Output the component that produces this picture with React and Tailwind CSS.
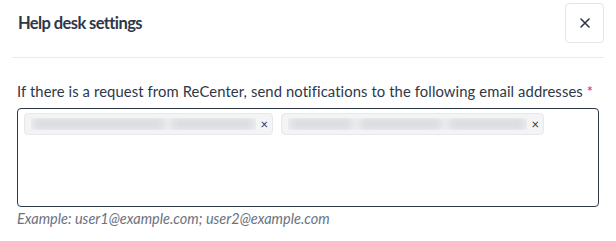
import React from "react";

function Chip({ width, blurs }) {
  return (
    <div
      className="flex items-center h-[22px] rounded-[4px] border border-[#e6e8eb] bg-[#f3f4f6] pl-[6px] pr-[4px]"
      style={{ width }}
    >
      <div className="flex-1 flex items-center gap-[4px] overflow-hidden">
        {blurs.map((w, i) => (
          <div key={i} className="h-[12px] rounded-full bg-[#d6d9dd] blur-[4px]" style={{ width: w }} />
        ))}
      </div>
      <span className="ml-[4px] text-[13px] leading-none text-[#2d3748]">×</span>
    </div>
  );
}

export default function App() {
  return (
    <div className="w-[616px] h-[241px] bg-white font-['Lato','Noto_Sans',sans-serif] text-[#2d3748]">
      <div className="flex items-center justify-between pl-[18px] pr-[12px] pt-[3px]">
        <h2 className="text-[16.5px] font-bold tracking-[-0.6px] whitespace-nowrap text-[#2d3748]">Help desk settings</h2>
        <button className="flex items-center justify-center w-[39px] h-[40px] rounded-[4px] border border-[#e2e5e9] bg-white">
          <svg width="12" height="12" viewBox="0 0 12 12" fill="none" stroke="#2d3748" strokeWidth="1.6" strokeLinecap="round">
            <path d="M2 2L10 10M10 2L2 10" />
          </svg>
        </button>
      </div>
      <div className="mx-[12px] mt-[14px] h-px bg-[#e8eaed]" />
      <div className="px-[17px] pt-[23px]">
        <label className="block whitespace-nowrap text-[14.8px] leading-[21px] tracking-[0.1px] text-[#2d3748]">
          If there is a request from ReCenter, send notifications to the following email addresses{" "}
          <span className="text-[#e0245e]">*</span>
        </label>
        <div className="mt-[6px] h-[99px] rounded-[4px] border border-[#2d3748] p-[4px] pl-[6px] flex items-start gap-[8px]">
          <Chip width={249} blurs={[140, 90]} />
          <Chip width={263} blurs={[70, 90, 85]} />
        </div>
        <p className="mt-[1px] whitespace-nowrap text-[14.5px] italic text-[#6b7280]">Example: user1@example.com; user2@example.com</p>
      </div>
    </div>
  );
}
